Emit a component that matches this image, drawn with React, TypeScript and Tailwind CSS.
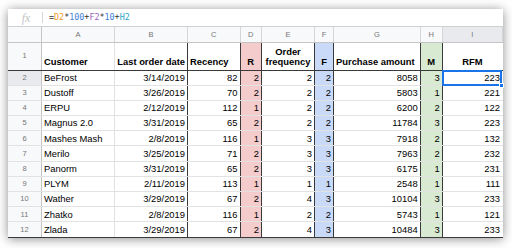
import React from "react";

type Col = {
  key: string;
  w: string;
  bg?: string;
  line: string;
  align: "left" | "right" | "center";
};

const DARK = "border-r-[#3a3a3a]";
const LIGHT = "border-r-[#e2e2e2]";

const cols: Col[] = [
  { key: "A", w: "w-[73px]", line: LIGHT, align: "left" },
  { key: "B", w: "w-[73px]", line: DARK, align: "right" },
  { key: "C", w: "w-[52.5px]", line: DARK, align: "right" },
  { key: "D", w: "w-[21.5px]", bg: "bg-[#f4cccc]", line: DARK, align: "right" },
  { key: "E", w: "w-[53px]", line: DARK, align: "right" },
  { key: "F", w: "w-[19px]", bg: "bg-[#c9daf8]", line: DARK, align: "right" },
  { key: "G", w: "w-[86.7px]", line: DARK, align: "right" },
  { key: "H", w: "w-[22px]", bg: "bg-[#d9ead3]", line: DARK, align: "right" },
  { key: "I", w: "w-[60.3px]", line: "border-r-transparent", align: "right" },
];

const headers = [
  { text: "Customer", align: "justify-start text-left" },
  { text: "Last order date", align: "justify-end text-right" },
  { text: "Recency", align: "justify-start text-left" },
  { text: "R", align: "justify-center text-center" },
  { text: "Order frequency", align: "justify-center text-center" },
  { text: "F", align: "justify-center text-center" },
  { text: "Purchase amount", align: "justify-start text-left" },
  { text: "M", align: "justify-center text-center" },
  { text: "RFM", align: "justify-center text-center" },
];

const rows: string[][] = [
  ["BeFrost", "3/14/2019", "82", "2", "2", "2", "8058", "3", "223"],
  ["Dustoff", "3/26/2019", "70", "2", "2", "2", "5803", "1", "221"],
  ["ERPU", "2/12/2019", "112", "1", "2", "2", "6200", "2", "122"],
  ["Magnus 2.0", "3/31/2019", "65", "2", "2", "2", "11784", "3", "223"],
  ["Mashes Mash", "2/8/2019", "116", "1", "3", "3", "7918", "2", "132"],
  ["Merilo", "3/25/2019", "71", "2", "3", "3", "7963", "2", "232"],
  ["Panorm", "3/31/2019", "65", "2", "3", "3", "6175", "1", "231"],
  ["PLYM", "2/11/2019", "113", "1", "1", "1", "2548", "1", "111"],
  ["Wather", "3/29/2019", "67", "2", "4", "3", "10104", "3", "233"],
  ["Zhatko", "2/8/2019", "116", "1", "2", "2", "5743", "1", "121"],
  ["Zlada", "3/29/2019", "67", "2", "4", "3", "10484", "3", "233"],
];

const FormulaBar = () => (
  <div className="flex h-[18px] items-center border-b border-b-[#d0d0d0] bg-white">
    <div className="flex w-[34px] items-center justify-center pl-[2px]">
      <span className="font-['Liberation_Serif',serif] text-[12px] italic leading-none text-[#c4c4c4]">
        fx
      </span>
    </div>
    <div className="h-[11px] w-px bg-[#d6d6d6]" />
    <div className="pl-[6px] font-['DejaVu_Sans_Mono',monospace] text-[8.4px] leading-none text-[#333]">
      =<span className="text-[#f09a2c]">D2</span>*
      <span className="text-[#3f7fd9]">100</span>+
      <span className="text-[#9b5fc0]">F2</span>*
      <span className="text-[#3f7fd9]">10</span>+
      <span className="text-[#2aa6c8]">H2</span>
    </div>
  </div>
);

const LetterRow = () => (
  <div className="flex h-[16px] border-b border-b-[#c4c4c4] bg-[#f8f9fa] text-[7.5px] leading-none text-[#777]">
    <div className="w-[34px] border-r border-r-[#c4c4c4]" />
    {cols.map((c) => (
      <div
        key={c.key}
        className={`${c.w} flex items-center justify-center border-r border-r-[#d6d6d6] ${
          c.key === "I" ? "bg-[#e8eaed]" : ""
        }`}
      >
        {c.key}
      </div>
    ))}
  </div>
);

const HeaderRow = () => (
  <div className="flex h-[27.5px] border-b border-b-[#3a3a3a] text-[9.4px] font-bold leading-[10.5px] text-black">
    <div className="flex w-[34px] items-center justify-center border-r border-r-[#c4c4c4] bg-[#f8f9fa] text-[7.5px] font-normal text-[#777]">
      1
    </div>
    {cols.map((c, i) => (
      <div
        key={c.key}
        className={`${c.w} ${c.bg ?? ""} ${c.line} flex items-end border-r px-[2px] pb-[2px] ${headers[i].align}`}
      >
        {c.key === "E" ? (
          <span>
            Order
            <br />
            frequency
          </span>
        ) : (
          <span className="whitespace-nowrap">{headers[i].text}</span>
        )}
      </div>
    ))}
  </div>
);

const DataRow = ({ n, cells, last }: { n: number; cells: string[]; last: boolean }) => (
  <div
    className={`flex h-[15.2px] border-b text-[9.4px] leading-none text-black ${
      last ? "border-b-[#3a3a3a]" : "border-b-[#e2e2e2]"
    }`}
  >
    <div
      className={`flex w-[34px] items-center justify-center border-r border-r-[#c4c4c4] text-[7.5px] text-[#777] ${
        n === 2 ? "bg-[#e8eaed]" : "bg-[#f8f9fa]"
      }`}
    >
      {n}
    </div>
    {cols.map((c, i) => (
      <div
        key={c.key}
        className={`${c.w} ${c.bg ?? ""} ${c.line} relative flex items-center border-r px-[2px] whitespace-nowrap ${
          c.align === "left" ? "justify-start" : "justify-end"
        }`}
      >
        {cells[i]}
        {n === 2 && c.key === "I" && (
          <>
            <div className="absolute -top-px -bottom-px -left-px right-0 border-2 border-[#1a73e8]" />
            <div className="absolute -right-[2px] -bottom-[3px] h-[5px] w-[5px] border border-white bg-[#1a73e8]" />
          </>
        )}
      </div>
    ))}
  </div>
);

export default function App() {
  return (
    <div className="h-[248px] w-[512px] overflow-hidden bg-white pt-[9px] pl-[8px] font-['Liberation_Sans',Arial,sans-serif]">
      <div className="w-[495px] bg-white shadow-[0_1px_10px_rgba(0,0,0,0.45)]">
        <FormulaBar />
        <LetterRow />
        <HeaderRow />
        {rows.map((r, i) => (
          <DataRow key={i} n={i + 2} cells={r} last={i === rows.length - 1} />
        ))}
      </div>
    </div>
  );
}
